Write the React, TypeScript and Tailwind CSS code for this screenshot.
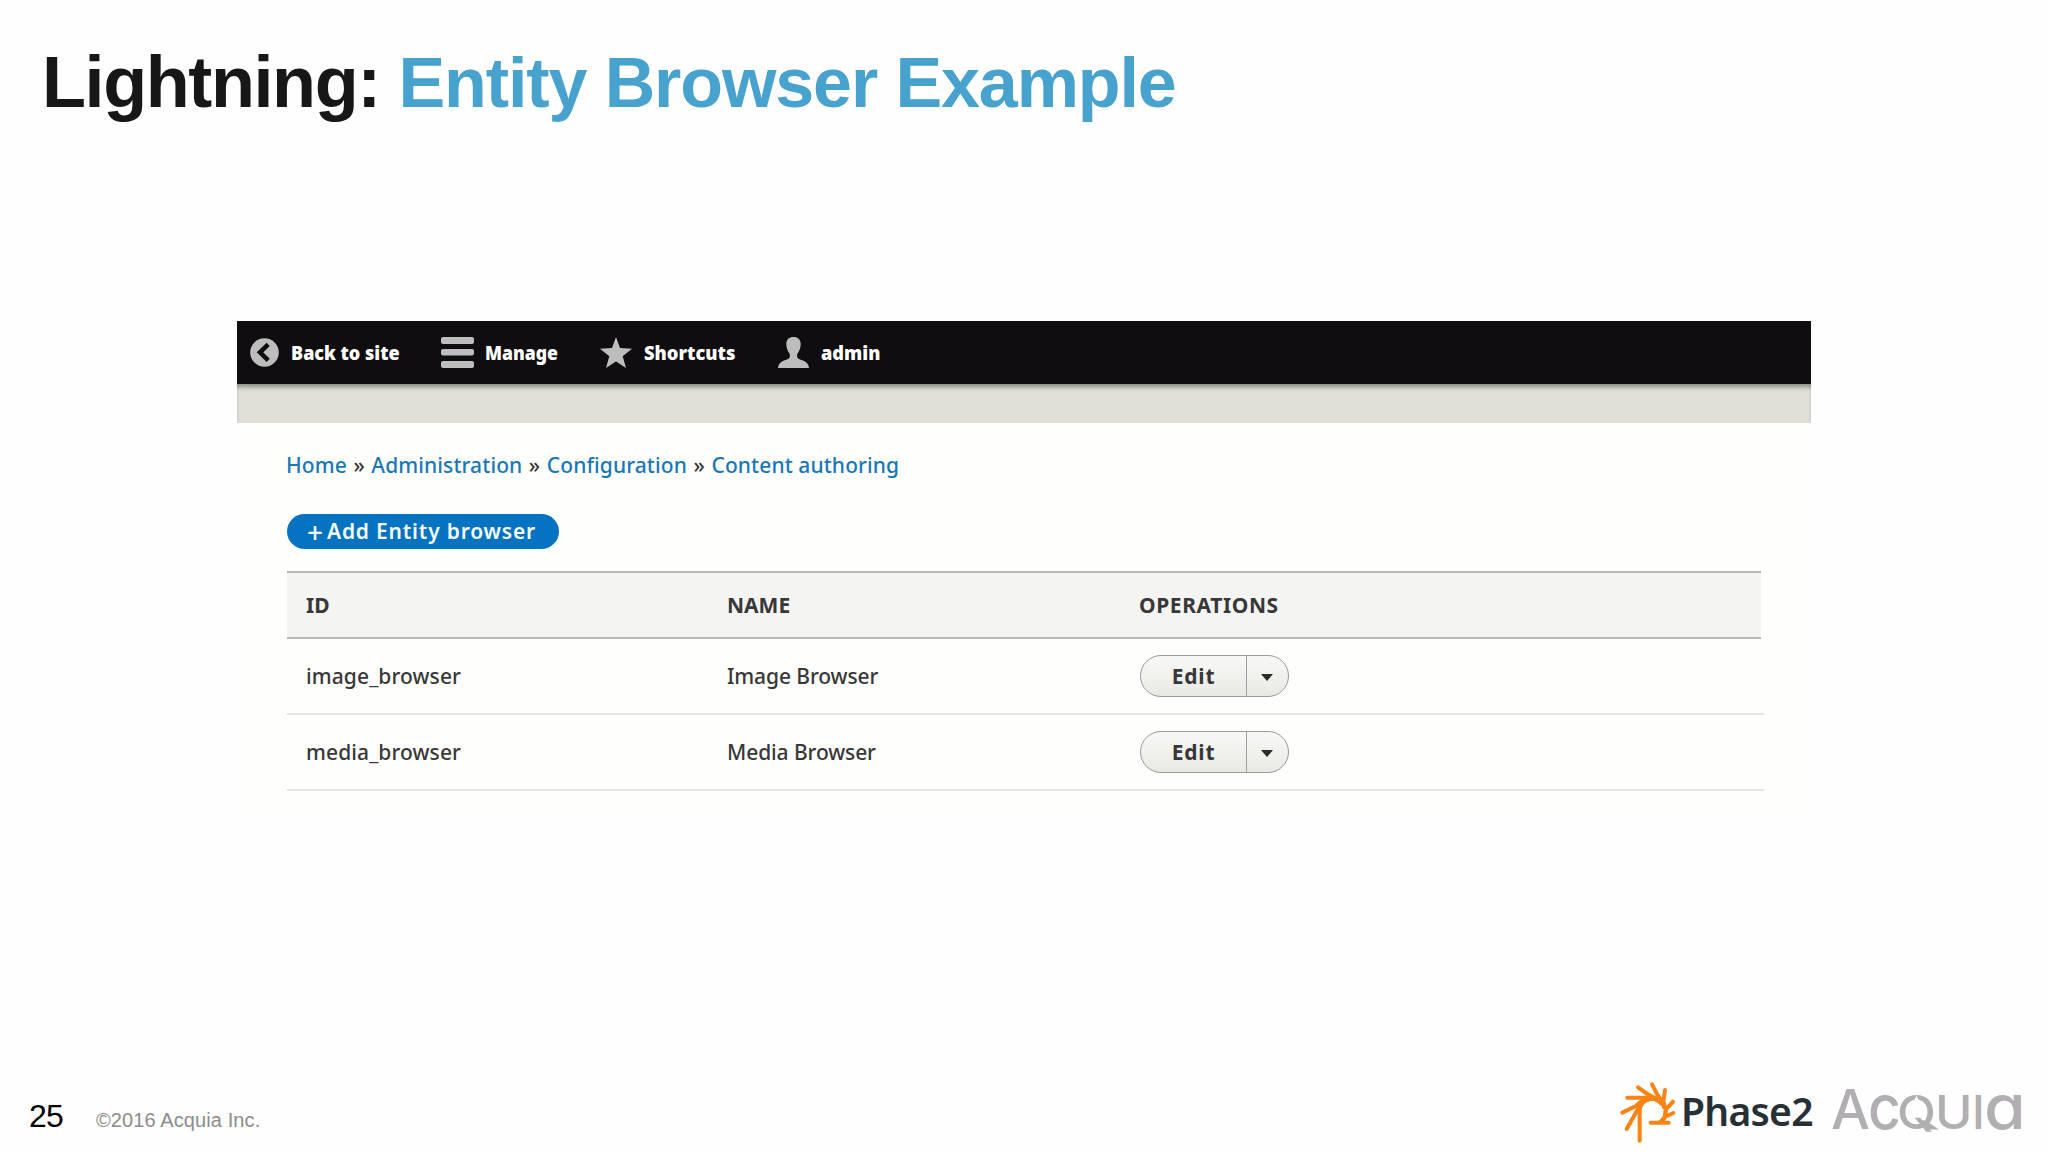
const operaciones = [
  { id: 'image_browser', name: 'Image Browser' },
  { id: 'media_browser', name: 'Media Browser' },
];

const breadcrumb = ['Home', 'Administration', 'Configuration', 'Content authoring'];

function BackIcon() {
  return (
    <svg className="h-[29px] w-[29px]" viewBox="0 0 29 29">
      <circle cx="14.5" cy="14.5" r="14.3" fill="#bebdbe" />
      <path d="M18.2 6.3 L10 14.3 L18.2 22.3" fill="none" stroke="#0f0d10" strokeWidth="4.6" />
    </svg>
  );
}

function MenuIcon() {
  return (
    <svg className="h-[31px] w-[33px]" viewBox="0 0 33 31" fill="#bebdbe">
      <rect y="0" width="33" height="7" rx="2" />
      <rect y="12" width="33" height="6.5" rx="2" />
      <rect y="24" width="33" height="7" rx="2" />
    </svg>
  );
}

function StarIcon() {
  return (
    <svg className="h-[31px] w-[32px]" viewBox="0 0 32 31" fill="#bebdbe">
      <path d="M16 0 L20 11 L32 11.7 L22.7 19.2 L26 31 L16 24.4 L6 31 L9.3 19.2 L0 11.7 L12 11 Z" />
    </svg>
  );
}

function UserIcon() {
  return (
    <svg className="h-[31px] w-[31px]" viewBox="0 0 31 31" fill="#bebdbe">
      <path d="M15.5 0 C19.8 0 22.7 2.3 22.7 7 C22.7 11.3 21 14.8 19.3 17 C18.6 19.8 19.3 21.3 21.5 22.3 C26.5 24.2 30.5 25.4 31 31 L0 31 C0.5 25.4 4.5 24.2 9.5 22.3 C11.7 21.3 12.4 19.8 11.7 17 C10 14.8 8.3 11.3 8.3 7 C8.3 2.3 11.2 0 15.5 0 Z" />
    </svg>
  );
}

function PhaseIcon() {
  return (
    <svg
      className="mt-5 h-[64px] w-[57px]"
      viewBox="60 60 171 192"
      fill="none"
      stroke="#f98416"
      strokeWidth="12"
      strokeLinecap="round"
      strokeLinejoin="round"
    >
      <path d="M119 242 V158 C119 132 134 117 157 117" />
      <path d="M80 207 L111 152 C117 135 128 122 144 119" />
      <path d="M67 158 L108 138 C118 128 128 119 140 117" />
      <path d="M82 113 H142 C160 113 175 120 185 132" />
      <path d="M114 82 L142 102 L172 118" />
      <path d="M156 73 L172 104 L188 128" />
      <path d="M195 90 L190 125 L192 142" />
      <path d="M219 125 L198 148 L195 164" />
      <path d="M220 159 L198 169 L184 184" />
      <path d="M152 188 H206" />
      <path d="M172 112 C190 122 199 140 197 158 C196 170 190 180 180 186" />
    </svg>
  );
}

function AcquiaLogo() {
  return (
    <div className="relative mt-[17px] flex items-baseline font-['Inter'] leading-[60px] font-medium text-[#b1afb2]">
      <span className="w-[37px] text-[55px]">A</span>
      <span className="w-[29px] origin-left scale-x-[0.92] text-[62px]">c</span>
      <span className="w-[38px] origin-left scale-x-[1.08] text-[47px]">Q</span>
      <span className="w-[37px] origin-left scale-x-[1.08] text-[47px]">U</span>
      <span className="w-[12px] text-[47px]">I</span>
      <span className="w-[35px] origin-left scale-x-[1.09] text-[62px] [font-feature-settings:'cv11']">a</span>
      {/* drop tip and tail of the Q */}
      <svg className="absolute top-[18px] left-[68px] h-[36px] w-[42px]" viewBox="0 0 42 36">
        <path d="M17.5 0 C18 5 25 8 28 13 L17.5 11 L8 13 C11 8 17 5 17.5 0 Z" fill="#fefefe" />
        <path d="M24 25 C29 27 34 30 40 34.5 H29 L20 31 Z" fill="#b1afb2" />
      </svg>
    </div>
  );
}

function EditButton() {
  return (
    <div className="ml-px flex h-[42px] w-[149px] overflow-hidden rounded-full border border-[#9a9a9a] bg-linear-to-b from-[#f8f8f6] to-[#e9e9e4]">
      <span className="flex w-[106px] items-center justify-center border-r border-[#a0a0a0] pt-[2px] text-[21px] font-bold tracking-[0.8px]">
        Edit
      </span>
      <span className="flex flex-1 items-center justify-center pt-[3px] pr-[2px]">
        <svg className="h-[7px] w-[12px]" viewBox="0 0 12 7">
          <path d="M0 0 H12 L6 7 Z" fill="#2b2b2b" />
        </svg>
      </span>
    </div>
  );
}

export default function App() {
  return (
    <div className="flex h-[1152px] w-[2048px] flex-col overflow-hidden bg-[#fefefe] font-['Noto_Sans',sans-serif] text-[#383838]">
      <h1 className="h-[164px] pt-[46px] pl-[42px] font-['Liberation_Sans'] text-[72px] leading-[72px] font-bold tracking-[-1.4px] whitespace-nowrap text-[#171717]">
        Lightning: <span className="text-[70px] tracking-[-1.1px] text-[#47a2ce]">Entity Browser Example</span>
      </h1>

      <main className="mt-[157px] ml-[237px] h-[499px] w-[1574px] bg-[#fefefd]">
        <nav className="relative flex h-[63px] items-center bg-[#0f0d10] pl-[13px] text-[20px] font-black text-white">
          <div className="flex w-[191px] items-center">
            <div className="w-[41px]"><BackIcon /></div>
            <span className="origin-left scale-x-90 whitespace-nowrap">Back to site</span>
          </div>
          <div className="flex w-[159px] items-center">
            <div className="w-[44px]"><MenuIcon /></div>
            <span className="origin-left scale-x-[0.88]">Manage</span>
          </div>
          <div className="flex w-[178px] items-center">
            <div className="w-[44px]"><StarIcon /></div>
            <span className="origin-left scale-x-[0.915]">Shortcuts</span>
          </div>
          <div className="flex items-center">
            <div className="w-[43px]"><UserIcon /></div>
            <span className="origin-left scale-x-[0.91]">admin</span>
          </div>
        </nav>
        <div className="h-[39px] bg-[#e0e0d9] shadow-[inset_0_5px_5px_-2px_rgba(0,0,0,0.4)]" />

        <div className="mt-[28px] flex h-[30px] items-center gap-[6.5px] pl-[49px] text-[21px] font-medium tracking-[0.1px] whitespace-nowrap">
          {breadcrumb.map((item, i) => (
            <div key={item} className="flex gap-[6.5px]">
              {i > 0 && <span>»</span>}
              <span className="text-[#1b77b3]">{item}</span>
            </div>
          ))}
        </div>

        <button className="mt-[33px] ml-[50px] flex h-[35px] w-[272px] items-center rounded-full bg-[#0573bf] pt-px pl-[17px] text-[21px] font-semibold tracking-[0.8px] whitespace-nowrap text-[#f4fafe]">
          <span className="w-[23px] text-[28px] leading-[34px] font-medium">+</span>
          Add Entity browser
        </button>

        <div className="mt-[22px] ml-[50px] w-[1474px]">
          <div className="grid h-[68px] grid-cols-[421px_412px_1fr] items-center border-y-2 border-[#b9b9b8] bg-[#f4f4f3] pt-[2px] pl-[19px] text-[21px] font-bold">
            <span>ID</span>
            <span>NAME</span>
            <span className="tracking-[0.6px]">OPERATIONS</span>
          </div>
          {operaciones.map((row) => (
            <div
              key={row.id}
              className="grid h-[76px] w-[1477px] grid-cols-[421px_412px_1fr] items-center border-b-2 border-[#e6e6e6] pl-[19px] text-[21px] font-medium"
            >
              <span className="pt-[2px] tracking-[0.1px]">{row.id}</span>
              <span className="pt-[2px] tracking-[-0.1px]">{row.name}</span>
              <EditButton />
            </div>
          ))}
        </div>
      </main>

      <footer className="mt-[240px] flex h-[92px] items-start font-['Liberation_Sans']">
        <div className="flex w-[1620px] items-baseline pt-[40px] pl-[29px]">
          <span className="w-[67px] text-[32px] leading-[32px] tracking-[-0.8px] text-black">25</span>
          <span className="text-[20px] tracking-[0.1px] text-[#8c8c8c]">©2016 Acquia Inc.</span>
        </div>
        <PhaseIcon />
        <span className="mt-[31px] ml-[4px] w-[150px] font-['Noto_Sans'] text-[39px] leading-[40px] font-semibold tracking-[-0.7px] text-[#263035]">
          Phase2
        </span>
        <AcquiaLogo />
      </footer>
    </div>
  );
}
